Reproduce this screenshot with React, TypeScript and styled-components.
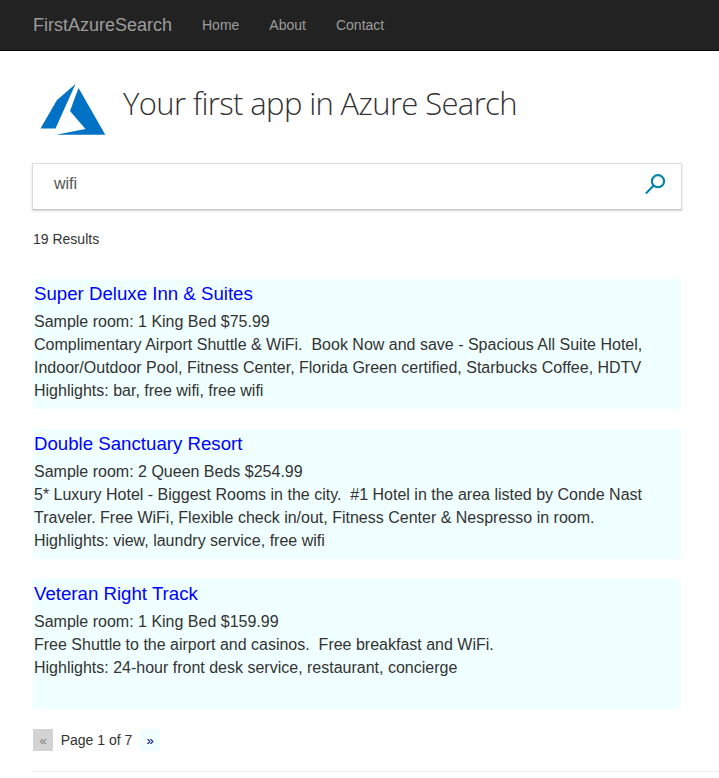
import React from "react";
import styled, { createGlobalStyle } from "styled-components";

const Global = createGlobalStyle`
  *, *::before, *::after { box-sizing: border-box; }
  html, body { margin: 0; background: #fff; overflow: hidden; }
  body { font-family: "Liberation Sans", Arial, sans-serif; font-size: 14px; line-height: 20px; color: #333; }
`;

const Page = styled.div`
  height: 778px;
  overflow: hidden;
`;

const Navbar = styled.nav`
  display: flex;
  align-items: center;
  height: 51px;
  padding-left: 33px;
  background: #222;
  border-bottom: 1px solid #080808;
`;

const Brand = styled.a`
  width: 139px;
  margin-right: 30px;
  font-size: 18px;
  color: #9d9d9d;
  white-space: nowrap;
`;

const NavLink = styled.a`
  margin-right: 30px;
  color: #9d9d9d;
`;

const Main = styled.main`
  margin-left: 33px;
`;

const Header = styled.header`
  display: flex;
  height: 112px;
  padding: 32px 0 0 7px;
`;

const Title = styled.h1`
  margin: -1px 0 0 17px;
  font: 300 31px/43px "Open Sans", sans-serif;
  letter-spacing: -0.63px;
  white-space: nowrap;
  color: #333;
`;

const SearchBox = styled.form`
  display: flex;
  justify-content: space-between;
  width: 650px;
  height: 47px;
  margin-left: -1px;
  padding: 10px 15px 0 21px;
  border: 1px solid #ddd;
  border-bottom-color: #c4c4c4;
  box-shadow: 0 1px 2px rgba(0, 0, 0, 0.18);
`;

const Query = styled.span`
  font-size: 16px;
  color: #555;
`;

const Count = styled.p`
  margin: 19px 0 30px;
`;

const Result = styled.article`
  width: 648px;
  height: 130px;
  margin-bottom: 20px;
  padding: 2px 1px;
  background: #f0ffff;
  font-size: 16px;
  line-height: 23px;
  white-space: pre;
`;

const Name = styled.h2`
  margin: 0 0 3px;
  font-size: 14pt;
  font-weight: 400;
  line-height: 26px;
  color: #00f;
`;

const Pager = styled.div`
  display: flex;
  align-items: center;
  height: 22px;
  margin-bottom: 20px;
`;

const PageButton = styled.span<{ $disabled?: boolean }>`
  width: 20px;
  height: 22px;
  font-size: 13px;
  line-height: 23px;
  text-align: center;
  color: ${(p) => (p.$disabled ? "#808080" : "#000080")};
  background: ${(p) => (p.$disabled ? "#d3d3d3" : "#f0ffff")};
`;

const PageLabel = styled.span`
  width: 87px;
  text-align: center;
`;

const Divider = styled.hr`
  margin: 0;
  border: 0;
  border-top: 1px solid #eee;
`;

const results = [
  {
    name: "Super Deluxe Inn & Suites",
    lines: [
      "Sample room: 1 King Bed $75.99",
      "Complimentary Airport Shuttle & WiFi.  Book Now and save - Spacious All Suite Hotel,",
      "Indoor/Outdoor Pool, Fitness Center, Florida Green certified, Starbucks Coffee, HDTV",
      "Highlights: bar, free wifi, free wifi",
    ],
  },
  {
    name: "Double Sanctuary Resort",
    lines: [
      "Sample room: 2 Queen Beds $254.99",
      "5* Luxury Hotel - Biggest Rooms in the city.  #1 Hotel in the area listed by Conde Nast",
      "Traveler. Free WiFi, Flexible check in/out, Fitness Center & Nespresso in room.",
      "Highlights: view, laundry service, free wifi",
    ],
  },
  {
    name: "Veteran Right Track",
    lines: [
      "Sample room: 1 King Bed $159.99",
      "Free Shuttle to the airport and casinos.  Free breakfast and WiFi.",
      "Highlights: 24-hour front desk service, restaurant, concierge",
    ],
  },
];

export default function App() {
  return (
    <Page>
      <Global />
      <Navbar>
        <Brand>FirstAzureSearch</Brand>
        <NavLink>Home</NavLink>
        <NavLink>About</NavLink>
        <NavLink>Contact</NavLink>
      </Navbar>
      <Main>
        <Header>
          <svg width="66" height="53" viewBox="0 0 66 53">
            <path d="M35.5 1 L17 17 L0.5 45.5 H15.5 Z" fill="#0072c6" />
            <path d="M38.5 5 L30 28 L45.5 46 L16 51.8 H65.3 Z" fill="#0072c6" />
          </svg>
          <Title>Your first app in Azure Search</Title>
        </Header>
        <SearchBox>
          <Query>wifi</Query>
          <svg width="21" height="21" viewBox="0 0 21 21" fill="none" stroke="#0082ab" strokeWidth="2.1">
            <circle cx="13" cy="7.2" r="6.1" />
            <path d="M8.7 11.6 L0.9 19.4" />
          </svg>
        </SearchBox>
        <Count>19 Results</Count>
        {results.map((r) => (
          <Result key={r.name}>
            <Name>{r.name}</Name>
            {r.lines.map((l) => (
              <div key={l}>{l}</div>
            ))}
          </Result>
        ))}
        <Pager>
          <PageButton $disabled>«</PageButton>
          <PageLabel>Page 1 of 7</PageLabel>
          <PageButton>»</PageButton>
        </Pager>
        <Divider />
      </Main>
    </Page>
  );
}
